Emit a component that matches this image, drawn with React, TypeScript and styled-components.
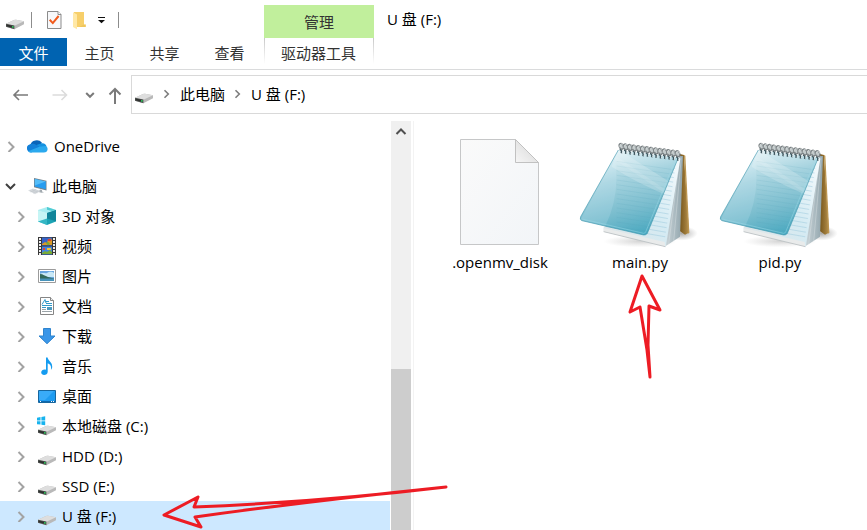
import React from "react";
import styled, { createGlobalStyle } from "styled-components";

const GlobalStyle = createGlobalStyle`
  *, *::before, *::after { box-sizing: border-box; }
  body {
    margin: 0;
    background: #fff;
    color: #000;
    font: 15px/20px "Open Sans", "Noto Sans CJK SC", sans-serif;
  }
  button { font: inherit; color: inherit; border: 0; padding: 0; background: none; cursor: default; }
  ul { list-style: none; margin: 0; padding: 0; }
  svg { display: block; flex: none; }
`;

const Window = styled.div`
  height: 100vh;
  display: flex;
  flex-direction: column;
  overflow: hidden;
`;

const Header = styled.header`
  flex: none;
  display: grid;
  grid-template-columns: 264px 110px 1fr;
  padding-bottom: 3px;
  border-bottom: 1px solid #dadbdc;
`;

const QuickAccess = styled.div`
  display: flex;
  align-items: center;
  gap: 6px;
  height: 38px;
  padding: 2px 0 0 5px;
`;

const IconButton = styled.button`
  display: flex;
  align-items: center;
  justify-content: center;
`;

const Separator = styled.span<{ $before?: number; $after?: number }>`
  width: 1px;
  height: 16px;
  background: #8c8c8c;
  margin: 0 ${(p) => p.$after ?? 0}px 0 ${(p) => p.$before ?? 0}px;
`;

const TabBar = styled.nav`
  display: flex;
  height: 28px;
`;

const Tab = styled.button<{ $primary?: boolean }>`
  width: ${(p) => (p.$primary ? 67 : 65)}px;
  padding: 1px 0 0;
  color: ${(p) => (p.$primary ? "#fff" : "#333")};
  background: ${(p) => (p.$primary ? "#0063b1" : "none")};
`;

const ContextGroup = styled.div`
  padding-top: 5px;
`;

const ContextTitle = styled.div`
  height: 33px;
  line-height: 34px;
  text-align: center;
  color: #333;
  background: #c1ef9c;
`;

const ContextTab = styled.button`
  width: 100%;
  height: 28px;
  padding: 1px 1px 0 0;
  color: #333;
  background:
    linear-gradient(#c8c8c8, #fff 26px) left / 1px 100% no-repeat,
    linear-gradient(#c8c8c8, #fff 26px) right / 1px 100% no-repeat;
`;

const WindowTitle = styled.h1`
  margin: 0;
  padding: 9px 13px;
  font-size: 15px;
  line-height: 20px;
  font-weight: 400;
`;

const AddressRow = styled.div`
  flex: none;
  display: grid;
  grid-template-columns: 40px 40px 19px 32px 1fr;
  padding: 5px 0 7px;
`;

const AddressBox = styled.nav`
  display: flex;
  align-items: center;
  gap: 7px;
  height: 39px;
  padding: 0 0 2px 2px;
  border: 1px solid #d9d9d9;
  border-right: 0;
`;

const Body = styled.main`
  flex: 1;
  min-height: 0;
  display: grid;
  grid-template-columns: 390px 20px 1fr;
  column-gap: 1px;
`;

const Tree = styled.ul`
  padding-top: 10px;
`;

const TreeItem = styled.li<{ $gap?: boolean }>`
  position: relative;
  margin-bottom: ${(p) => (p.$gap ? 10 : 0)}px;
`;

const TreeRow = styled.button<{ $level: number; $selected?: boolean }>`
  display: flex;
  align-items: center;
  width: 100%;
  height: 30px;
  padding-left: ${(p) => 5 + p.$level * 10}px;
  text-align: left;
  background: ${(p) => (p.$selected ? "#cde8ff" : "none")};
`;

const TreeIcon = styled.span`
  margin: 0 5px 0 10px;
`;

const ScrollBar = styled.div`
  display: flex;
  flex-direction: column;
  background: #f0f0f0;
`;

const ScrollUp = styled(IconButton)`
  height: 20px;
`;

const ScrollThumb = styled.div`
  flex: 1;
  margin-top: 228px;
  background: #cdcdcd;
`;

const Files = styled.ul`
  display: flex;
  flex-wrap: wrap;
  align-content: flex-start;
  margin-left: 1px;
  padding: 17px 0 0 16px;
  border-left: 1px solid #f3f3f3;
`;

const FileItem = styled.li`
  position: relative;
  width: 140px;
`;

const FileButton = styled.button`
  display: flex;
  flex-direction: column;
  align-items: center;
  width: 100%;
  line-height: 24px;
`;

const ArrowUp = styled.svg`
  position: absolute;
  left: 54px;
  top: 134px;
`;

const ArrowLeft = styled.svg`
  position: absolute;
  left: 160px;
  top: -21px;
  z-index: 1;
  pointer-events: none;
`;

const DriveIcon = ({ system = false }: { system?: boolean }) => (
  <svg width="20" height="20" viewBox="0 0 20 20">
    <path d="M1 13.700 9 10q1-.4 2-.2l8 1.400v3L9.400 19.200 1 16.800z" fill="#b9b9b9" />
    <path d="M1 13.700 9 10q1-.4 2-.2l8 1.400-9.600 4.500z" fill="#dedede" />
    <path d="M1 13.700 9.400 15.600V19.200L1 16.800z" fill="#555856" />
    <path d="m1.500 14.500 7.200 1.600v2L1.500 16.200z" fill="#2e312f" />
    <path d="M7 16h1.700v1.700H7z" fill="#31b85a" />
    {system && (
      <g fill="#17b3ee">
        <path d="M0 1.700 3.500 1v3.400H0zM4.400.9 8.200.3v4.100H4.400zM0 5.300h3.500v3.300L0 8.200zM4.400 5.300h3.800v4l-3.800-.6z" />
      </g>
    )}
  </svg>
);

const CheckDocIcon = () => (
  <svg width="20" height="20" viewBox="0 0 20 20">
    <path d="M3.500 1.500H14l3 3v14H3.500z" fill="#f7f8fa" stroke="#8b8b8b" />
    <path d="M14 1.500v3h3" fill="#fff" stroke="#8b8b8b" />
    <path d="m5.700 9.800 3.100 3.300L14.600 6" fill="none" stroke="#f05a1c" strokeWidth="2" />
  </svg>
);

const FolderIcon = () => (
  <svg width="20" height="20" viewBox="0 0 20 20">
    <path d="M4 2h10v13l1.600-.5V17H5z" fill="#f7cf6a" />
    <path d="M14 14.500h1.600V17H9z" fill="#efc65c" />
    <path d="m3 2.300 4 2.200v14.800l-4-2.400z" fill="#ffe8a6" />
  </svg>
);

const CustomizeIcon = () => (
  <svg width="12" height="8" viewBox="0 0 12 8">
    <path d="M2 1h7v1H2zM2 4h7L5.500 7.200z" fill="#111" />
  </svg>
);

const Chevron = ({ open = false, color = "#a3a3a3" }: { open?: boolean; color?: string }) => (
  <svg width="12" height="12" viewBox="0 0 12 12" fill="none" stroke={color} strokeWidth="2">
    <path d={open ? "m1 4 4.500 4.500L10 4" : "m3.500 2 5 5-5 5"} />
  </svg>
);

const CrumbChevron = () => (
  <svg width="12" height="12" viewBox="0 0 12 12" fill="none" stroke="#7c7c7c" strokeWidth="1.600">
    <path d="m3.500 2.200 3.800 3.800L3.500 9.800" />
  </svg>
);

const NavArrow = ({ kind }: { kind: "back" | "forward" | "recent" | "up" }) => {
  const paths = {
    back: "M17 10H2.500M8 5l-5 5 5 5",
    forward: "M1.500 10H16M10.500 5l5 5-5 5",
    recent: "m5.200 8 3.800 3.800L12.800 8",
    up: "M9 19V4M3.500 9.500 9 4l5.500 5.500",
  };
  const strong = kind === "recent" || kind === "up";
  return (
    <svg width="18" height="20" viewBox="0 0 18 20" fill="none"
      stroke={kind === "forward" ? "#dcdcdc" : "#7a7a7a"} strokeWidth={strong ? 2 : 1.6}>
      <path d={paths[kind]} />
    </svg>
  );
};

const OneDriveIcon = () => (
  <svg width="22" height="20" viewBox="1 0 20 20" preserveAspectRatio="none">
    <path d="M4 9A6 6 0 0 1 14.500 6.500L12 12 3.500 11z" fill="#0a64b8" />
    <path d="M3.800 8.200C6 7.200 8 8 9 8.700l4.500 2.700L5 16.400A4.200 4.200 0 0 1 3.800 8.200" fill="#1480d8" />
    <path d="M13 7.800c3-1.500 5.500.5 5.700 2.700L15 13 9.500 9z" fill="#1591e0" />
    <path d="M2 15.200 12.300 10.800l6-.8c2 1.500 2.300 6.300-2 6.600H5c-1.500 0-2.500-.5-3-1.400" fill="#2ba9ee" />
  </svg>
);

const ComputerIcon = () => (
  <svg width="20" height="20" viewBox="0 0 20 20">
    <path d="m7 2 12.500 2.800v9.700L7 11.200z" fill="#73808a" />
    <path d="m7.800 3 11 2.500v7.700l-11-2.800z" fill="#269cf0" />
    <path d="m7.800 3 11 2.500-11 4z" fill="#55bdf8" />
    <path d="m13 13.500 2 .5v1.500l2 .8-2.500.5-3-.8z" fill="#a1a9af" />
    <path d="m1 14.500 5-2 7.500 2.500-5.500 3.200z" fill="#d9dde0" />
    <path d="m3 14.600 7.500 2.200M5 13.700l7 2.100M3.500 16l6-3M6 17l5.500-2.500" stroke="#bcc3c8" strokeWidth=".5" />
  </svg>
);

const CubeIcon = () => (
  <svg width="20" height="20" viewBox="0 0 20 20">
    <path d="m1 4 9-3 9 3-9 3z" fill="#a8edf1" />
    <path d="m10 1 9 3-4 1-5-1.300z" fill="#50cbd3" />
    <path d="M1 4l9 3v12l-9-3.600z" fill="#55d1d9" />
    <path d="m1 4 9 2.700v7L1 15.400z" fill="#c6f5f5" />
    <path d="M19 4l-9 3v12l9-3.600z" fill="#1ba3b4" />
    <path d="m10 7 9-3v11.300l-9-2.700z" fill="#11859a" />
    <path d="m1 15.400 9-2.800v6.400z" fill="#35b7c4" />
  </svg>
);

const VideoIcon = () => (
  <svg width="20" height="20" viewBox="0 0 20 20">
    <path d="M1 1h18v18H1z" fill="#393939" />
    <path d="M5 1.500h10v8H5z" fill="#3763c8" />
    <path d="M5 10.500h10v8H5z" fill="#4284df" />
    <path d="m5 8 3-2 2 1 1-4 3-.5 1 2V9H5z" fill="#d99a28" />
    <path d="M9 7c1-2 3-1 4 1l-2 1.500zM5 17l3-2 2 1 3-2 2 2v2H5z" fill="#79ac35" />
    <path d="M11 3h3v2h-3zM6 12h2v2H6z" fill="#df4338" />
    <path d="M10 12h4v2h-4z" fill="#f0c43b" />
    <path d="M3 2v17M17 2v17" stroke="#eee" strokeWidth="2" strokeDasharray="2 1" />
  </svg>
);

const PictureIcon = () => (
  <svg width="20" height="20" viewBox="0 0 20 20">
    <path d="M1.500 3.500h17v13h-17z" fill="#fff" stroke="#9b9b9b" />
    <path d="M3 5h14v10H3z" fill="#69a6e0" />
    <path d="M3 8c3-2 5 0 7-1s4-2 7 0v4H3z" fill="#c8e8f6" />
    <path d="M3 8c3 0 5 2 8 3l6 1.500V13H3z" fill="#32695a" />
    <path d="M3 12.500h14V15H3z" fill="#4793ba" />
  </svg>
);

const DocumentIcon = () => (
  <svg width="20" height="20" viewBox="0 0 20 20">
    <path d="M3.500 1.500h10l3 3v14h-13z" fill="#fff" stroke="#858585" />
    <path d="M13.500 1.500v3h3" fill="#eee" stroke="#858585" />
    <path d="m5 8.500 3-5 1 3.500M9 5.500h3M9 7.500h6M5 9.500h10M5 11.500h4" stroke="#3099c9" fill="none" />
    <path d="M5 13.500h4M5 15.500h10" stroke="#9aa3a8" />
    <path d="M10 11h5v3h-5z" fill="#4b9ac0" />
  </svg>
);

const DownloadIcon = () => (
  <svg width="20" height="20" viewBox="0 0 20 20">
    <path d="M6.500 2.500h7v7.500H18L10 17.700 2 10h4.500z" fill="#3a96e8" stroke="#2f84ce" />
  </svg>
);

const MusicIcon = () => (
  <svg width="20" height="20" viewBox="0 0 20 20">
    <path d="M9 1.500h1.600c.3 3.500 5.400 4.500 4.500 10.200-.2 1-.6 1.600-1.200 2.100.8-4-1-5.600-3.200-6.500v8.500c0 4-6.500 4.300-6.500.8 0-2.300 2.500-3.700 4.800-2.900z" fill="#159cf0" />
  </svg>
);

const DesktopIcon = () => (
  <svg width="20" height="20" viewBox="0 0 20 20">
    <path d="M1.500 4.500h17v12h-17z" fill="#1e9bf0" stroke="#17669e" />
    <path d="M2 5h15L8 14H2z" fill="#39abf8" />
    <path d="M2 15h16v1H2z" fill="#0e68ae" />
    <path d="M3 15h1v1H3zM14 15h1v1h-1zM16 15h1v1h-1z" fill="#fff" />
  </svg>
);

const BlankFileIcon = () => (
  <svg width="124" height="112" viewBox="0 0 124 112">
    <defs>
      <linearGradient id="sheet" x1="0" y1="0" x2="1" y2="1">
        <stop offset="0" stopColor="#fafafa" />
        <stop offset="1" stopColor="#f2f5f8" />
      </linearGradient>
      <linearGradient id="fold" x1="0" y1="1" x2="1" y2="0">
        <stop offset="0" stopColor="#f6f6f6" />
        <stop offset="1" stopColor="#d4d4d4" />
      </linearGradient>
    </defs>
    <path d="M22.500 1.500h55l23 23v82h-78z" fill="url(#sheet)" stroke="#c6c7c8" />
    <path d="M77.500 1.500v23h23z" fill="url(#fold)" stroke="#c1c1c1" />
  </svg>
);

const rings = Array.from({ length: 14 }, (_, i) => ({ x: 154 + i * 13, y: 49 + i * 1.7 }));
const rules = Array.from({ length: 16 }, (_, i) => 96 + i * 14);

const NotepadIcon = () => (
  <svg width="124" height="112" viewBox="24 24 372 336">
    <defs>
      <linearGradient id="cover" x1=".3" y1="0" x2=".6" y2="1">
        <stop offset="0" stopColor="#e6f4f8" />
        <stop offset=".35" stopColor="#a6d3df" />
        <stop offset=".7" stopColor="#7abdce" />
        <stop offset="1" stopColor="#4ba9c0" />
      </linearGradient>
      <linearGradient id="page" x1="0" y1="1" x2="1" y2="0">
        <stop offset="0" stopColor="#dfe4e6" />
        <stop offset=".5" stopColor="#d5ebf3" />
        <stop offset="1" stopColor="#f7fbfd" />
      </linearGradient>
      <linearGradient id="stack" x1="0" y1="0" x2="1" y2="0">
        <stop offset="0" stopColor="#ccd6da" />
        <stop offset="1" stopColor="#8fa3ab" />
      </linearGradient>
      <linearGradient id="board" x1="0" y1="0" x2="1" y2="0">
        <stop offset="0" stopColor="#6e4e14" />
        <stop offset=".6" stopColor="#967334" />
        <stop offset="1" stopColor="#b8924c" />
      </linearGradient>
      <radialGradient id="shade">
        <stop offset="0" stopColor="#555" stopOpacity=".5" />
        <stop offset="1" stopColor="#777" stopOpacity="0" />
      </radialGradient>
      <clipPath id="pageClip"><path d="M320 84 282 345 105 298 160 70z" /></clipPath>
      <clipPath id="coverClip"><path d="M145 60 325 83 232 310Q229 316 221 315L36 272Q28 269 32 260z" /></clipPath>
    </defs>
    <ellipse cx="335" cy="310" rx="48" ry="22" fill="url(#shade)" />
    <ellipse cx="210" cy="334" rx="110" ry="18" fill="url(#shade)" opacity=".5" />
    <path d="M330 72 342 75 357 308 345 314 325 300z" fill="url(#board)" />
    <path d="M342 75 346 77 358 308 354 311z" fill="#bb9550" />
    <path d="M322 78 339 78 330 320 284 350z" fill="url(#stack)" />
    <path d="m330 82-34 260M334 82l-23 252" stroke="#e8edef" strokeWidth="2" opacity=".5" />
    <path d="M322 78 331 86 287 350 101 305V292z" fill="url(#page)" />
    <g clipPath="url(#pageClip)" stroke="#9bc9dd" strokeWidth="1.500">
      {rules.map((y) => <path key={y} d={`M100 ${y - 18} 330 ${y + 22}`} />)}
    </g>
    <path d="m101 294 183 42 2 14-185-45z" fill="#e9ebeb" />
    <path d="m101 305 185 45" stroke="#aeb4b6" strokeWidth="2" />
    <path d="M145 60 325 83 232 310Q229 316 221 315L36 272Q28 269 32 260z" fill="url(#cover)" />
    <g clipPath="url(#coverClip)">
      <g stroke="#4c9db2" strokeWidth="1.500" opacity=".25">
        {rules.map((y) => <path key={y} d={`M140 ${y - 2} 330 ${y + 26}`} />)}
      </g>
      <path d="M145 60 136 95Q150 200 105 290H20z" fill="#d5f1f8" opacity=".18" />
      <path d="m138 76 10-15 170 107-15 32Q210 165 125 110z" fill="#fff" opacity=".2" />
      <path d="m132 88 6-10 150 102-4 10z" fill="#fff" opacity=".12" />
    </g>
    <path d="M145 60 32 260Q28 269 36 272L221 315Q229 316 232 310L325 83" fill="none" stroke="#3a94ac" strokeWidth="3" opacity=".6" />
    <path d="m37 267 184 43q4 0 6-4l90-218" fill="none" stroke="#9eddeb" strokeWidth="2" opacity=".65" />
    {rings.map(({ x, y }) => (
      <g key={x} fill="none">
        <path d={`M${x - 5} ${y + 9}q8 1 5 12`} stroke="#3d565e" strokeWidth="5" />
        <path d={`M${x + 2} ${y + 10}q4 4 1 10`} stroke="#dce4e6" strokeWidth="3" />
        <ellipse cx={x} cy={y} rx="6" ry="9" fill="#c3cbcc" stroke="#798083" strokeWidth="4" transform={`rotate(-20 ${x} ${y})`} />
        <path d={`M${x - 5} ${y + 3}q-1-10 6-11 6 1 5 8`} stroke="#e3e6e6" strokeWidth="2" />
      </g>
    ))}
  </svg>
);

const tree = [
  { name: "OneDrive", icon: <OneDriveIcon />, level: 0, gap: true },
  { name: "此电脑", icon: <ComputerIcon />, level: 0, open: true },
  { name: "3D 对象", icon: <CubeIcon />, level: 1 },
  { name: "视频", icon: <VideoIcon />, level: 1 },
  { name: "图片", icon: <PictureIcon />, level: 1 },
  { name: "文档", icon: <DocumentIcon />, level: 1 },
  { name: "下载", icon: <DownloadIcon />, level: 1 },
  { name: "音乐", icon: <MusicIcon />, level: 1 },
  { name: "桌面", icon: <DesktopIcon />, level: 1 },
  { name: "本地磁盘 (C:)", icon: <DriveIcon system />, level: 1 },
  { name: "HDD (D:)", icon: <DriveIcon />, level: 1 },
  { name: "SSD (E:)", icon: <DriveIcon />, level: 1 },
  { name: "U 盘 (F:)", icon: <DriveIcon />, level: 1, selected: true },
];

const files = [
  { name: ".openmv_disk", icon: <BlankFileIcon /> },
  { name: "main.py", icon: <NotepadIcon />, marked: true },
  { name: "pid.py", icon: <NotepadIcon /> },
];

export default function App() {
  return (
    <Window>
      <GlobalStyle />
      <Header>
        <div>
          <QuickAccess>
            <DriveIcon />
            <Separator $after={6} />
            <IconButton aria-label="属性"><CheckDocIcon /></IconButton>
            <IconButton aria-label="新建文件夹"><FolderIcon /></IconButton>
            <IconButton aria-label="自定义快速访问工具栏"><CustomizeIcon /></IconButton>
            <Separator $before={4} />
          </QuickAccess>
          <TabBar>
            <Tab $primary>文件</Tab>
            <Tab>主页</Tab>
            <Tab>共享</Tab>
            <Tab>查看</Tab>
          </TabBar>
        </div>
        <ContextGroup>
          <ContextTitle>管理</ContextTitle>
          <ContextTab>驱动器工具</ContextTab>
        </ContextGroup>
        <WindowTitle>U 盘 (F:)</WindowTitle>
      </Header>

      <AddressRow>
        <IconButton aria-label="后退"><NavArrow kind="back" /></IconButton>
        <IconButton aria-label="前进" disabled><NavArrow kind="forward" /></IconButton>
        <IconButton aria-label="最近浏览的位置"><NavArrow kind="recent" /></IconButton>
        <IconButton aria-label="上移"><NavArrow kind="up" /></IconButton>
        <AddressBox aria-label="地址">
          <DriveIcon />
          <CrumbChevron />
          <button>此电脑</button>
          <CrumbChevron />
          <button>U 盘 (F:)</button>
        </AddressBox>
      </AddressRow>

      <Body>
        <Tree>
          {tree.map((item) => (
            <TreeItem key={item.name} $gap={item.gap}>
              <TreeRow $level={item.level} $selected={item.selected}>
                <Chevron open={item.open} color={item.open ? "#404040" : undefined} />
                <TreeIcon>{item.icon}</TreeIcon>
                {item.name}
              </TreeRow>
              {item.selected && (
                <ArrowLeft width="292" height="52" viewBox="160 480 292 52" fill="none"
                  stroke="#ed1c24" strokeWidth="3" strokeLinecap="round" strokeLinejoin="round">
                  <path d="M446 487Q320 502 194 507L198 497 164 515 201 527 195 517Q310 501 446 487" />
                </ArrowLeft>
              )}
            </TreeItem>
          ))}
        </Tree>
        <ScrollBar>
          <ScrollUp aria-label="向上滚动">
            <svg width="12" height="12" viewBox="0 0 12 12" fill="none" stroke="#505050" strokeWidth="2">
              <path d="m1.500 9 4.500-4.500L10.500 9" />
            </svg>
          </ScrollUp>
          <ScrollThumb />
        </ScrollBar>
        <Files>
          {files.map((file) => (
            <FileItem key={file.name}>
              <FileButton>
                {file.icon}
                {file.name}
              </FileButton>
              {file.marked && (
                <ArrowUp width="44" height="112" viewBox="624 272 44 112" fill="none"
                  stroke="#ed1c24" strokeWidth="3" strokeLinecap="round" strokeLinejoin="round">
                  <path d="M650 377 647 350 640 307 630 312 642 276 660 310 649 306 648 345 650 377" />
                </ArrowUp>
              )}
            </FileItem>
          ))}
        </Files>
      </Body>
    </Window>
  );
}
